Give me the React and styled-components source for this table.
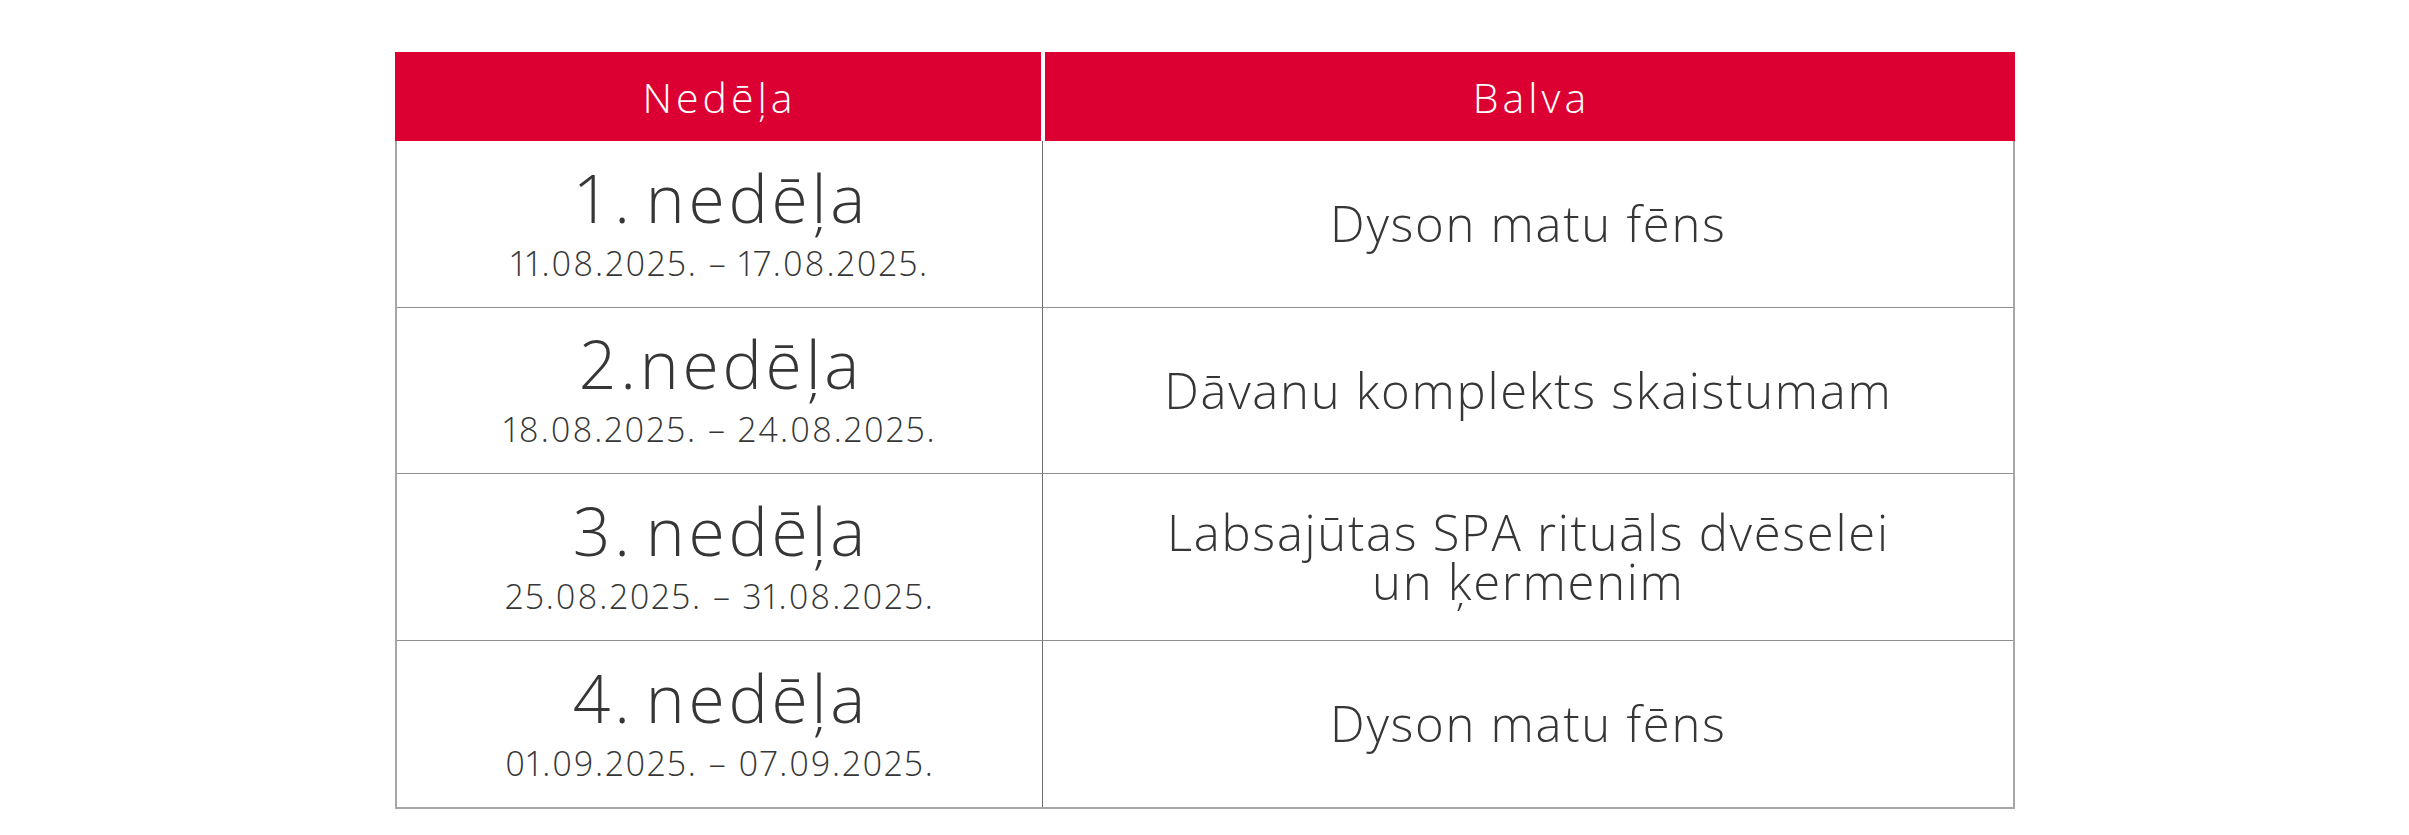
import React from "react";
import styled, { createGlobalStyle } from "styled-components";

const GlobalStyle = createGlobalStyle`
  html, body {
    margin: 0;
    padding: 0;
    background: #ffffff;
  }
  body {
    font-family: "Open Sans", "Noto Sans", "DejaVu Sans", sans-serif;
    color: #363636;
  }
  * { box-sizing: border-box; }
`;

const Page = styled.div`
  width: 2409px;
  height: 835px;
  padding-top: 52px;
  display: flex;
  justify-content: center;
  align-items: flex-start;
`;

const Table = styled.div`
  width: 1620px;
  display: flex;
  flex-direction: column;
`;

const HeaderRow = styled.div`
  display: grid;
  grid-template-columns: 646px 970px;
  column-gap: 4px;
  height: 89px;
`;

const HeaderCell = styled.div`
  background: #dc0032;
  color: #ffffff;
  display: flex;
  align-items: center;
  justify-content: center;
  font-size: 41px;
  font-weight: 300;
  letter-spacing: 4px;
  padding-left: 4px;
  line-height: 1;
  padding-top: 2px;
`;

const Body = styled.div`
  display: grid;
  grid-template-columns: 646px 970px;
  grid-auto-rows: 166.5px;
  border-left: 2px solid #a6a6a6;
  border-right: 2px solid #a6a6a6;
  border-bottom: 2px solid #a6a6a6;
`;

const Cell = styled.div`
  display: flex;
  flex-direction: column;
  align-items: center;
  justify-content: center;
  text-align: center;
  padding-bottom: ${(p) => (p.$week ? "5px" : "0")};
  border-bottom: ${(p) => (p.$last ? "none" : "1.5px solid #8f8f8f")};
  border-right: ${(p) => (p.$week ? "1px solid #6e6e6e" : "none")};
`;

const WeekTitle = styled.div`
  font-size: 66px;
  font-weight: 300;
  line-height: 84px;
  letter-spacing: 3.8px;
  word-spacing: -9px;
  padding-left: 3.8px;
  color: #363636;
  white-space: nowrap;
`;

const WeekDates = styled.div`
  font-size: 34px;
  font-weight: 300;
  line-height: 49px;
  letter-spacing: 2px;
  padding-left: 2px;
  font-variant-numeric: proportional-nums;
  color: #363636;
  white-space: nowrap;
`;

const Prize = styled.div`
  font-size: 49px;
  font-weight: 300;
  line-height: 49px;
  letter-spacing: 1.7px;
  padding-left: 1.7px;
  color: #363636;
`;

const rows = [
  { week: "1. nedēļa", dates: "11.08.2025. – 17.08.2025.", prize: ["Dyson matu fēns"] },
  { week: "2.nedēļa", dates: "18.08.2025. – 24.08.2025.", prize: ["Dāvanu komplekts skaistumam"] },
  {
    week: "3. nedēļa",
    dates: "25.08.2025. – 31.08.2025.",
    prize: ["Labsajūtas SPA rituāls dvēselei", "un ķermenim"],
  },
  { week: "4. nedēļa", dates: "01.09.2025. – 07.09.2025.", prize: ["Dyson matu fēns"] },
];

export default function App() {
  return (
    <>
      <GlobalStyle />
      <Page>
        <Table>
          <HeaderRow>
            <HeaderCell>Nedēļa</HeaderCell>
            <HeaderCell>Balva</HeaderCell>
          </HeaderRow>
          <Body>
            {rows.map((r, i) => {
              const last = i === rows.length - 1;
              return (
                <React.Fragment key={i}>
                  <Cell $week $last={last}>
                    <WeekTitle>{r.week}</WeekTitle>
                    <WeekDates>{r.dates}</WeekDates>
                  </Cell>
                  <Cell $last={last}>
                    <Prize>
                      {r.prize.map((line, j) => (
                        <React.Fragment key={j}>
                          {j > 0 && <br />}
                          {line}
                        </React.Fragment>
                      ))}
                    </Prize>
                  </Cell>
                </React.Fragment>
              );
            })}
          </Body>
        </Table>
      </Page>
    </>
  );
}
